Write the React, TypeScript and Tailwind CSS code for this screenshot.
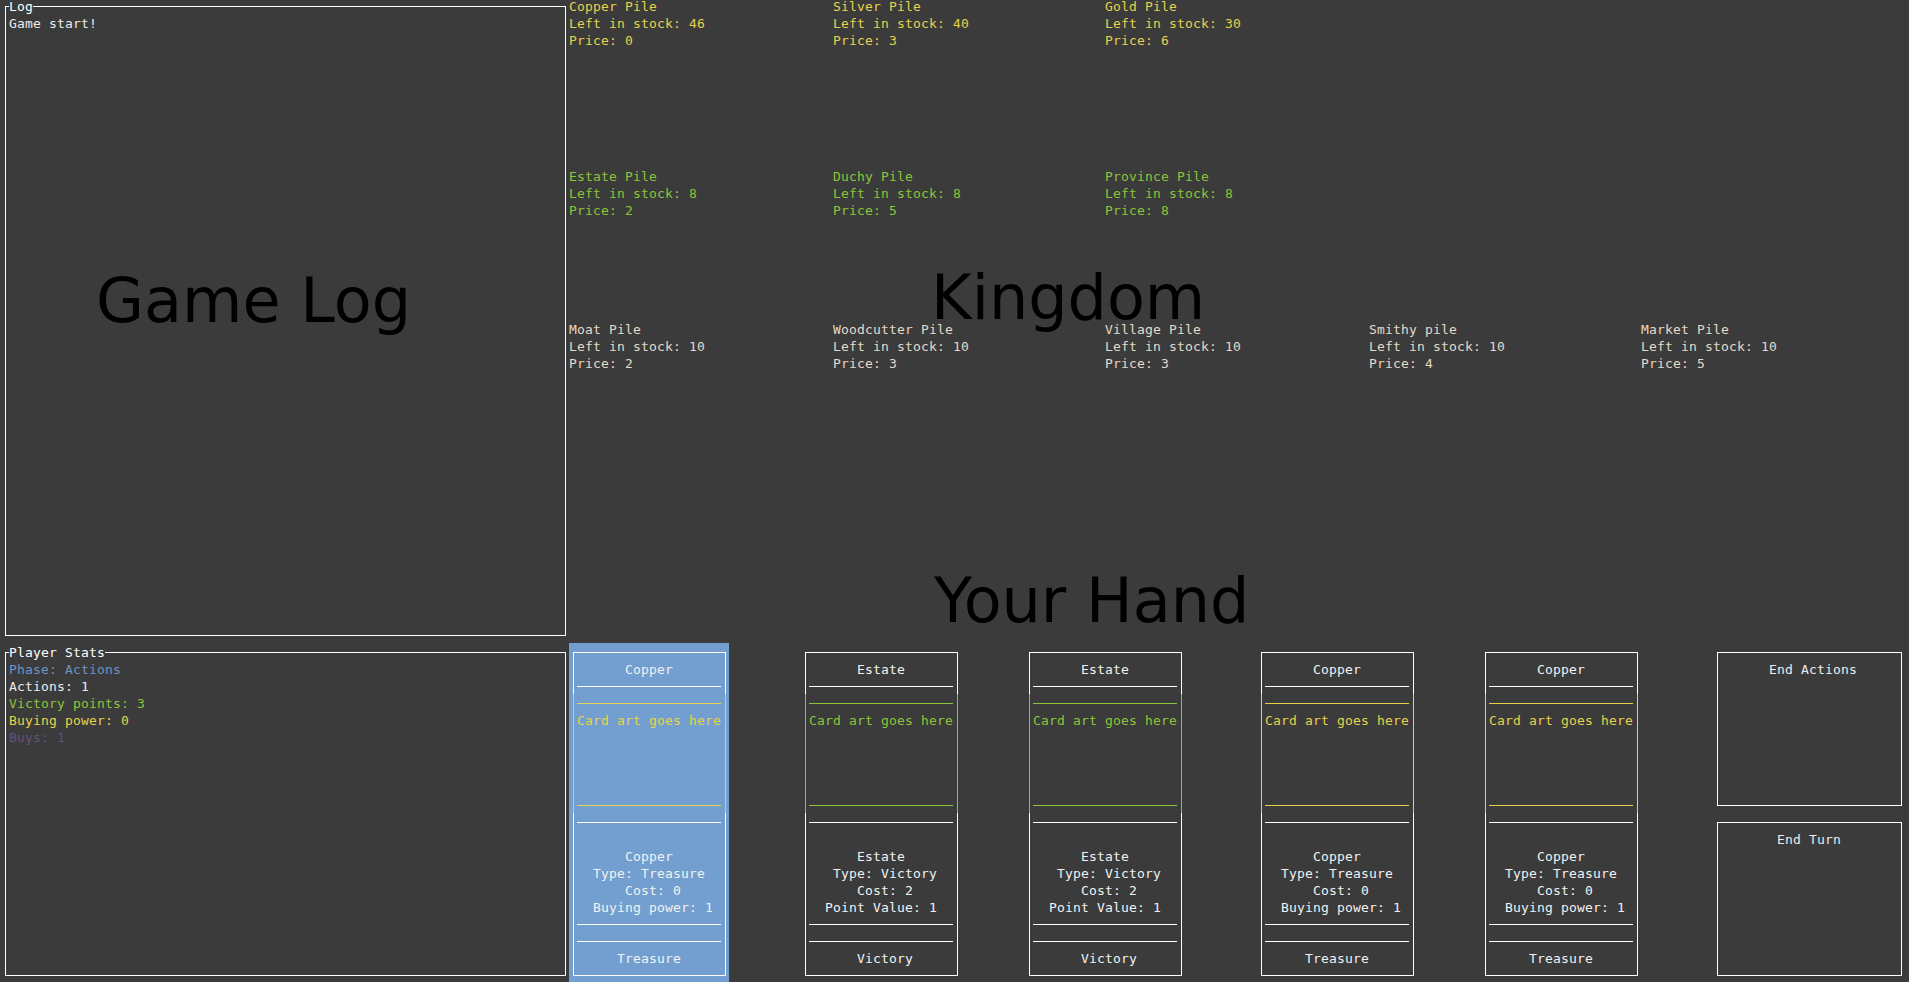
import clsx from 'clsx';
import { ReactNode } from 'react';

// terminal grid: one cell is 8px wide and 17px high

interface Pile {
    name: string;
    stock: number;
    price: number;
}

interface HandCard {
    name: string;
    kind: 'Treasure' | 'Victory';
    lines: string[];
    selected?: boolean;
}

const pileRows: { color: string; height: string; piles: Pile[] }[] = [
    {
        color: 'text-[#e6d24c]',
        height: 'h-[170px]',
        piles: [
            { name: 'Copper Pile', stock: 46, price: 0 },
            { name: 'Silver Pile', stock: 40, price: 3 },
            { name: 'Gold Pile', stock: 30, price: 6 },
        ],
    },
    {
        color: 'text-[#8ac53a]',
        height: 'h-[153px]',
        piles: [
            { name: 'Estate Pile', stock: 8, price: 2 },
            { name: 'Duchy Pile', stock: 8, price: 5 },
            { name: 'Province Pile', stock: 8, price: 8 },
        ],
    },
    {
        color: 'text-[#e4dac8]',
        height: 'h-[323px]',
        piles: [
            { name: 'Moat Pile', stock: 10, price: 2 },
            { name: 'Woodcutter Pile', stock: 10, price: 3 },
            { name: 'Village Pile', stock: 10, price: 3 },
            { name: 'Smithy pile', stock: 10, price: 4 },
            { name: 'Market Pile', stock: 10, price: 5 },
        ],
    },
];

const pileWidths = ['w-[264px]', 'w-[272px]', 'w-[264px]', 'w-[272px]', 'w-[264px]'];

const hand: HandCard[] = [
    { name: 'Copper', kind: 'Treasure', lines: ['Copper', 'Type: Treasure', 'Cost: 0', 'Buying power: 1'], selected: true },
    { name: 'Estate', kind: 'Victory', lines: ['Estate', 'Type: Victory', 'Cost: 2', 'Point Value: 1'] },
    { name: 'Estate', kind: 'Victory', lines: ['Estate', 'Type: Victory', 'Cost: 2', 'Point Value: 1'] },
    { name: 'Copper', kind: 'Treasure', lines: ['Copper', 'Type: Treasure', 'Cost: 0', 'Buying power: 1'] },
    { name: 'Copper', kind: 'Treasure', lines: ['Copper', 'Type: Treasure', 'Cost: 0', 'Buying power: 1'] },
];

const cardGaps = ['', 'ml-[72px]', 'ml-[64px]', 'ml-[72px]', 'ml-[64px]'];

const artStyle = {
    Treasure: { line: 'bg-[#e6d24c]', border: 'border-[#e6d24c]', text: 'text-[#e6d24c]' },
    Victory: { line: 'bg-[#8ac53a]', border: 'border-[#8ac53a]', text: 'text-[#8ac53a]' },
};

// pad like the terminal does: odd leftovers go to the left
function center(text: string, width: number) {
    return ' '.repeat(Math.max(0, Math.ceil((width - text.length) / 2))) + text;
}

function Line({ children, className }: { children?: ReactNode; className?: string }) {
    return <div className={clsx('h-[17px] whitespace-pre pt-px', className)}>{children}</div>;
}

function Rule({ color = 'bg-white' }: { color?: string }) {
    return (
        <div className="h-[17px] pt-[9px]">
            <div className={clsx('h-px', color)} />
        </div>
    );
}

function Box({ title, className, children }: { title?: string; className?: string; children?: ReactNode }) {
    return (
        <div className={clsx('shrink-0 pb-[7px] pl-[4px] pr-[3px] pt-[9px]', className)}>
            <div className="h-full border border-white pl-[3px] pr-[4px] pt-[7px]">
                {title && (
                    <Line className="-mt-[17px]">
                        <span className="bg-[#3b3b3b] text-white">{title}</span>
                    </Line>
                )}
                {children}
            </div>
        </div>
    );
}

function Card({ card }: { card: HandCard }) {
    const art = artStyle[card.kind];
    return (
        <div
            className={clsx(
                'h-[340px] w-[160px] shrink-0 pb-[7px] pl-[4px] pr-[3px] pt-[9px]',
                card.selected && 'bg-[#729fcf]'
            )}
        >
            <div className="h-full border border-white pl-[3px] pr-[4px] pt-[7px] text-[#f2f2f2]">
                <Line>{center(card.name, 18)}</Line>
                <Rule />
                <div className={clsx('-ml-[4px] -mr-[5px] h-[119px] border-x pl-[3px] pr-[4px]', art.border)}>
                    <Rule color={art.line} />
                    <Line className={art.text}>Card art goes here</Line>
                    <div className="h-[68px]" />
                    <Rule color={art.line} />
                </div>
                <Rule />
                <Line />
                {card.lines.map((line, i) => (
                    <Line key={i}>{center(line, 18)}</Line>
                ))}
                <Rule />
                <Rule />
                <Line>{center(card.kind, 18)}</Line>
            </div>
        </div>
    );
}

export default function App() {
    return (
        <div className="relative h-[982px] w-[1909px] overflow-hidden bg-[#3b3b3b] font-['DejaVu_Sans_Mono','Liberation_Mono',monospace] text-[13px] leading-[17px] tracking-[0.17px] text-[#ececec]">
            <div className="-mt-[3px] ml-px flex">
                {/* left column */}
                <div className="flex w-[568px] shrink-0 flex-col">
                    <Box title="Log" className="h-[646px]">
                        <Line>Game start!</Line>
                    </Box>
                    <Box title="Player Stats" className="h-[340px]">
                        <Line className="text-[#6e93c4]">Phase: Actions</Line>
                        <Line>Actions: 1</Line>
                        <Line className="text-[#8ac53a]">Victory points: 3</Line>
                        <Line className="text-[#e6d24c]">Buying power: 0</Line>
                        <Line className="text-[#65507a]">Buys: 1</Line>
                    </Box>
                </div>

                {/* kingdom + hand */}
                <div className="flex w-[1336px] shrink-0 flex-col">
                    <div className="h-[646px]">
                        {pileRows.map((row, r) => (
                            <div key={r} className={clsx('flex', row.height, row.color)}>
                                {row.piles.map((pile, i) => (
                                    <div key={pile.name} className={clsx('shrink-0', pileWidths[i])}>
                                        <Line>{pile.name}</Line>
                                        <Line>Left in stock: {pile.stock}</Line>
                                        <Line>Price: {pile.price}</Line>
                                    </div>
                                ))}
                            </div>
                        ))}
                    </div>

                    <div className="flex h-[340px]">
                        {hand.map((card, i) => (
                            <div key={i} className={cardGaps[i]}>
                                <Card card={card} />
                            </div>
                        ))}
                        <div className="ml-[72px] flex w-[192px] shrink-0 flex-col">
                            <Box className="h-[170px]">
                                <Line>{center('End Actions', 22)}</Line>
                            </Box>
                            <Box className="h-[170px]">
                                <Line>{center('End Turn', 22)}</Line>
                            </Box>
                        </div>
                    </div>
                </div>
            </div>

            {/* section captions drawn over the terminal */}
            <div className="absolute left-[96px] top-[270px] font-['DejaVu_Sans',sans-serif] text-[62px] leading-[62px] tracking-normal text-black">
                Game Log
            </div>
            <div className="absolute left-[931px] top-[267px] font-['DejaVu_Sans',sans-serif] text-[62px] leading-[62px] tracking-normal text-black">
                Kingdom
            </div>
            <div className="absolute left-[934px] top-[570px] font-['DejaVu_Sans',sans-serif] text-[62px] leading-[62px] tracking-normal text-black">
                Your Hand
            </div>
        </div>
    );
}
